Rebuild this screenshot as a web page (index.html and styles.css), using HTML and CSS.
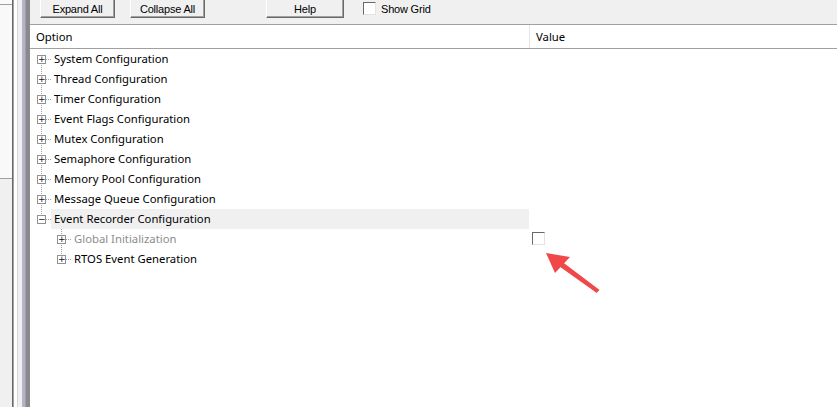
FILE: index.html
```html
<!DOCTYPE html>
<html lang="en">
<head>
    <meta charset="UTF-8">
    <title>Configuration Wizard</title>
    <link rel="stylesheet" href="styles.css">
</head>
<body>
    <div class="app">
        <div class="side">
            <div class="side-pane">
                <div class="side-top"></div>
                <div class="side-list"></div>
            </div>
            <div class="side-gap"></div>
        </div>
        <div class="splitter"></div>

        <div class="main">
            <div class="toolbar">
                <button class="btn">Expand All</button>
                <button class="btn btn-collapse">Collapse All</button>
                <button class="btn btn-help">Help</button>
                <label class="show-grid"><span class="check"></span>Show Grid</label>
            </div>

            <div class="grid">
                <div class="grid-head">
                    <div class="col-option">Option</div>
                    <div class="col-value">Value</div>
                </div>

                <div class="row">
                    <div class="opt"><span class="gutter first"><span class="box">+</span></span><span class="label">System Configuration</span></div>
                    <div class="val"></div>
                </div>
                <div class="row">
                    <div class="opt"><span class="gutter mid"><span class="box">+</span></span><span class="label">Thread Configuration</span></div>
                    <div class="val"></div>
                </div>
                <div class="row">
                    <div class="opt"><span class="gutter mid"><span class="box">+</span></span><span class="label">Timer Configuration</span></div>
                    <div class="val"></div>
                </div>
                <div class="row">
                    <div class="opt"><span class="gutter mid"><span class="box">+</span></span><span class="label">Event Flags Configuration</span></div>
                    <div class="val"></div>
                </div>
                <div class="row">
                    <div class="opt"><span class="gutter mid"><span class="box">+</span></span><span class="label">Mutex Configuration</span></div>
                    <div class="val"></div>
                </div>
                <div class="row">
                    <div class="opt"><span class="gutter mid"><span class="box">+</span></span><span class="label">Semaphore Configuration</span></div>
                    <div class="val"></div>
                </div>
                <div class="row">
                    <div class="opt"><span class="gutter mid"><span class="box">+</span></span><span class="label">Memory Pool Configuration</span></div>
                    <div class="val"></div>
                </div>
                <div class="row">
                    <div class="opt"><span class="gutter mid"><span class="box">+</span></span><span class="label">Message Queue Configuration</span></div>
                    <div class="val"></div>
                </div>
                <div class="row">
                    <div class="opt"><span class="gutter last"><span class="box">&minus;</span></span><span class="label selected">Event Recorder Configuration</span></div>
                    <div class="val"></div>
                </div>
                <div class="row">
                    <div class="opt child"><span class="gutter mid"><span class="box">+</span></span><span class="label disabled">Global Initialization</span></div>
                    <div class="val"><span class="check check-value"></span></div>
                </div>
                <div class="row">
                    <div class="opt child"><span class="gutter last"><span class="box">+</span></span><span class="label">RTOS Event Generation</span></div>
                    <div class="val"></div>
                </div>
            </div>
        </div>
    </div>

    <!-- annotation arrow -->
    <svg class="arrow" width="70" height="50" viewBox="0 0 70 50">
        <path d="M53.5 42 L55.5 40 L17 11 L13.5 13.5 Z" fill="#f04848" stroke="#f04848" stroke-width="1.5" stroke-linejoin="round"/>
        <polygon points="3,3 27,7 12,23" fill="#f04848"/>
    </svg>
</body>
</html>
```

FILE: styles.css
```css
body {
    margin: 0;
    width: 837px;
    height: 407px;
    overflow: hidden;
    background-color: #f0f0f0;
    font-family: "Noto Sans", "Segoe UI", sans-serif;
    font-size: 11.3px;
    color: #000;
}

.app {
    display: flex;
    height: 407px;
}

/* left pane and splitter */
.side {
    display: flex;
    width: 22px;
}

.side-pane {
    display: flex;
    flex-direction: column;
    width: 13px;
    border-right: 1px solid #696969;
}

.side-top {
    height: 4px;
    border-bottom: 1px solid #a0a0a0;
    background-color: #fafafa;
}

.side-list {
    height: 173px;
    border-bottom: 1px solid #a0a0a0;
    background-color: #f9f9f9;
}

.side-gap {
    width: 3px;
    border-left: 1px solid #a0a0a0;
    border-right: 1px solid #d8d8d8;
    background-color: #fff;
    margin-right: 4px;
}

.splitter {
    width: 4px;
    background-color: #b8b0cc;
    border-right: 4px solid #8a8a8a;
    box-shadow: inset -1px 0 0 #a0a0a0;
}

.main {
    flex: 1;
    display: flex;
    flex-direction: column;
}

/* toolbar */
.toolbar {
    height: 24px;
    border-bottom: 1px solid #a0a0a0;
    display: flex;
    align-items: flex-start;
    padding-left: 10px;
    overflow: hidden;
}

.btn {
    font-family: "Liberation Sans", Arial, sans-serif;
    font-size: 11px;
    letter-spacing: -0.2px;
    color: #000;
    width: 75px;
    height: 22px;
    margin-top: -4px;
    padding: 3px 0 0;
    background-color: #f0f0f0;
    border: 1px solid;
    border-color: #fff #696969 #696969 #fff;
    box-shadow: inset -1px -1px 0 #a0a0a0;
}

.btn-collapse {
    margin-left: 15px;
}

.btn-help {
    width: 78px;
    margin-left: 61px;
}

.show-grid {
    display: flex;
    align-items: center;
    margin-left: 19px;
    margin-top: 2px;
    font-family: "Liberation Sans", Arial, sans-serif;
    font-size: 11px;
    letter-spacing: -0.2px;
}

.check {
    display: inline-block;
    width: 11px;
    height: 11px;
    background-color: #fff;
    border: 1px solid;
    border-color: #696969 #e3e3e3 #e3e3e3 #696969;
    margin-right: 5px;
}

/* grid */
.grid {
    flex: 1;
    background-color: #fff;
}

.grid-head {
    display: flex;
    height: 23px;
    border-bottom: 1px solid #a0a0a0;
}

.col-option {
    width: 493px;
    padding-left: 6px;
    line-height: 24px;
    border-right: 1px solid #e5e5e5;
}

.col-value {
    padding-left: 6px;
    line-height: 24px;
}

.row {
    display: flex;
    height: 20px;
}

.opt {
    width: 499px;
    display: flex;
    padding-left: 2px;
    box-sizing: border-box;
}

.opt.child {
    padding-left: 22px;
}

.gutter {
    width: 19px;
    flex-shrink: 0;
    display: flex;
    align-items: flex-start;
    background-repeat: no-repeat;
    background-image:
        repeating-linear-gradient(to bottom, #a0a0a0 0 1px, transparent 1px 2px),
        repeating-linear-gradient(to right, #a0a0a0 0 1px, transparent 1px 2px);
}

.gutter.mid {
    background-size: 1px 20px, 10px 1px;
    background-position: 9px 0, 10px 10px;
}

.gutter.first {
    background-size: 1px 10px, 10px 1px;
    background-position: 9px 10px, 10px 10px;
}

.gutter.last {
    background-size: 1px 10px, 10px 1px;
    background-position: 9px 0, 10px 10px;
}

.box {
    width: 7px;
    height: 7px;
    margin: 6px 0 0 5px;
    border: 1px solid #919191;
    background-color: #fff;
    font-family: "DejaVu Sans", sans-serif;
    font-size: 9px;
    line-height: 6px;
    text-align: center;
    color: #141428;
    overflow: hidden;
}

.label {
    flex: 1;
    padding-left: 3px;
    line-height: 20px;
    white-space: nowrap;
}

.label.selected {
    background-color: #f0f0f0;
}

.label.disabled {
    color: #8c8c8c;
}

.val {
    flex: 1;
    padding-left: 3px;
}

.check-value {
    margin-top: 3px;
}

/* annotation */
.arrow {
    position: absolute;
    left: 543px;
    top: 250px;
}
```
